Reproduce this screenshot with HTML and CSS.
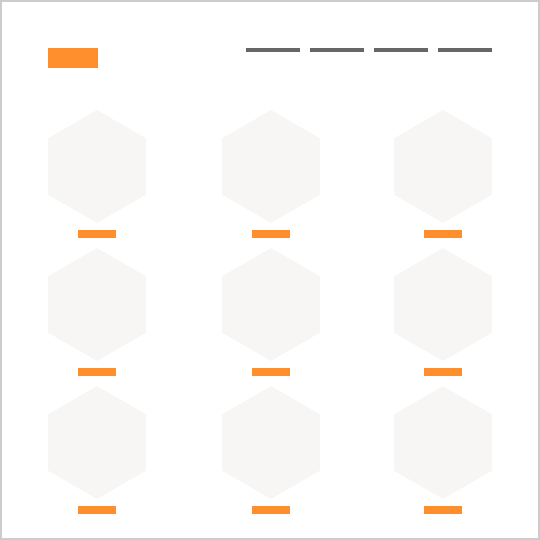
FILE: index.html
```html
<!DOCTYPE html>
<html>
<head>
<meta charset="utf-8">
<link rel="stylesheet" href="styles.css">
</head>
<body>
<div class="page">
  <header class="header">
    <div class="logo"></div>
    <nav class="nav">
      <span class="nav-item"></span>
      <span class="nav-item"></span>
      <span class="nav-item"></span>
      <span class="nav-item"></span>
    </nav>
  </header>
  <main class="grid">
    <div class="item"><div class="hex"></div><div class="label"></div></div>
    <div class="item"><div class="hex"></div><div class="label"></div></div>
    <div class="item"><div class="hex"></div><div class="label"></div></div>
    <div class="item"><div class="hex"></div><div class="label"></div></div>
    <div class="item"><div class="hex"></div><div class="label"></div></div>
    <div class="item"><div class="hex"></div><div class="label"></div></div>
    <div class="item"><div class="hex"></div><div class="label"></div></div>
    <div class="item"><div class="hex"></div><div class="label"></div></div>
    <div class="item"><div class="hex"></div><div class="label"></div></div>
  </main>
</div>
</body>
</html>
```
FILE: styles.css
```css
html, body {
  margin: 0;
  padding: 0;
  background: #ffffff;
  font-family: "Liberation Sans", Arial, sans-serif;
}
.page {
  width: 540px;
  height: 540px;
  box-sizing: border-box;
  border: 2px solid #cccccc;
  padding: 46px 46px 0 46px;
  background: #ffffff;
}
.header {
  display: flex;
  justify-content: space-between;
  align-items: flex-start;
  height: 20px;
}
.logo {
  width: 50px;
  height: 20px;
  background: #ff8f2d;
}
.nav {
  display: flex;
  gap: 10px;
}
.nav-item {
  display: block;
  width: 54px;
  height: 4px;
  background: #666666;
}
.grid {
  margin-top: 42px;
  display: grid;
  grid-template-columns: 174px 172px 98px;
  justify-items: start;
  row-gap: 10px;
}
.item {
  width: 98px;
  display: flex;
  flex-direction: column;
  align-items: center;
  gap: 7px;
}
.hex {
  width: 98px;
  height: 113px;
  background: #f7f6f5;
  clip-path: polygon(50% 0, 100% 25%, 100% 75%, 50% 100%, 0 75%, 0 25%);
}
.label {
  width: 38px;
  height: 8px;
  background: #ff8f2d;
}
```
